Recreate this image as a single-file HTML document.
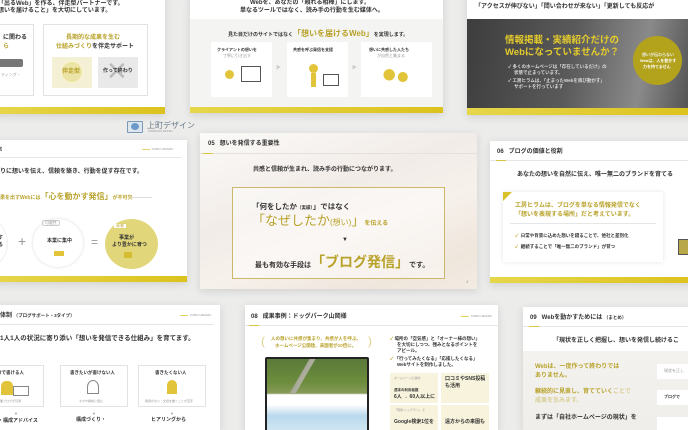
<!DOCTYPE html>
<html><head><meta charset="utf-8">
<style>
*{margin:0;padding:0;box-sizing:border-box}
html,body{width:688px;height:424px;overflow:hidden;background:#ececeb;font-family:"Liberation Sans","Noto Sans CJK JP",sans-serif;color:#333}
.c{position:absolute;background:#fff;box-shadow:0 2px 8px rgba(0,0,0,.12);overflow:hidden}
.t{position:absolute;white-space:nowrap;font-weight:bold;line-height:1}
.bar{position:absolute;left:0;right:0;bottom:0;height:6px;background:linear-gradient(90deg,#e6d64a,#dcc21c)}
.m{color:#b8a22a}
.bx{position:absolute;background:#fff;border:1px solid #e2e2e2}
.ln{position:absolute;height:1px;background:#e6e6e6}
.ul{position:absolute;height:1px;width:10px;background:#d8c440}
.g{color:#999;font-weight:normal}
</style></head><body>

<!-- Card A -->
<div class="c" style="left:-6px;top:-6px;width:171px;height:120px">
 <div class="t" style="left:4px;top:7px;font-size:6px">「出るWeb」を作る、伴走型パートナーです。</div>
 <div class="t" style="left:4px;top:14px;font-size:6px">想いを届けること」を大切にしています。</div>
 <div class="bx" style="left:0;top:30px;width:40px;height:72px">
  <div class="t" style="left:8px;top:10px;font-size:6px">に関わる</div>
  <div class="t m" style="left:8px;top:19px;font-size:6px">ら</div>
  <div style="position:absolute;left:2px;top:34px;width:26px;height:8px;background:#777;border-radius:2px"></div>
  <div class="t g" style="left:6px;top:48px;font-size:4px">ティング・</div>
 </div>
 <div class="bx" style="left:49px;top:30px;width:105px;height:72px">
  <div class="t m" style="left:22px;top:10px;font-size:6px">長期的な成果を生む</div>
  <div class="t" style="left:12px;top:19px;font-size:6px"><span class="m">仕組みづくり</span>を伴走サポート</div>
  <div style="position:absolute;left:8px;top:32px;width:40px;height:31px;background:#f4f0d6"></div>
  <div style="position:absolute;left:16px;top:35px;width:24px;height:24px;border-radius:50%;background:#ece3a6;border:2px solid #f7f2d0"></div>
  <div class="t m" style="left:18px;top:44px;font-size:6px">伴走型</div>
  <div style="position:absolute;left:54px;top:32px;width:40px;height:31px;background:#e9e9e9"></div>
  <div class="t" style="left:62px;top:33px;font-size:26px;color:#bbb;font-weight:normal">✕</div>
  <div class="t" style="left:59px;top:44px;font-size:5px">作って終わり</div>
 </div>
 <div class="bar" style="height:7px"></div>
</div>

<!-- Card B -->
<div class="c" style="left:190px;top:-6px;width:253px;height:119px">
 <div class="t" style="left:60px;top:6px;font-size:6px">Webを、あなたの「頼れる相棒」にします。</div>
 <div class="t" style="left:50px;top:14px;font-size:6px">単なるツールではなく、読み手の行動を生む媒体へ。</div>
 <div style="position:absolute;left:0;top:25px;width:253px;height:89px;background:#f4f4f2"></div>
 <div class="t" style="left:38px;top:36px;font-size:5px">見た目だけのサイトではなく<span class="m" style="font-size:8px">「想いを届けるWeb」</span>を実現します。</div>
 <div class="bx" style="left:21px;top:48px;width:61px;height:55px;border:none">
  <div class="t" style="left:6px;top:6px;font-size:4px">クライアントの想いを</div>
  <div class="t g" style="left:12px;top:12px;font-size:4px">丁寧に引き出す</div>
  <div style="position:absolute;left:30px;top:24px;width:20px;height:16px;border:1px solid #555"></div>
  <div style="position:absolute;left:14px;top:28px;width:9px;height:9px;border-radius:50%;background:#e2c43a"></div>
 </div>
 <div class="t" style="left:86px;top:72px;font-size:5px;color:#ccc">▶</div>
 <div class="bx" style="left:97px;top:48px;width:61px;height:55px;border:none">
  <div class="t" style="left:6px;top:6px;font-size:4px">共感を呼ぶ発信を支援</div>
  <div style="position:absolute;left:22px;top:22px;width:9px;height:9px;border-radius:50%;background:#e2c43a"></div>
  <div style="position:absolute;left:24px;top:31px;width:5px;height:14px;background:#e2c43a"></div>
  <div style="position:absolute;left:36px;top:32px;width:16px;height:12px;border:1px solid #555"></div>
 </div>
 <div class="t" style="left:162px;top:72px;font-size:5px;color:#ccc">▶</div>
 <div class="bx" style="left:171px;top:48px;width:71px;height:55px;border:none">
  <div class="t" style="left:8px;top:6px;font-size:4px">想いに共感した人たち</div>
  <div class="t g" style="left:16px;top:12px;font-size:4px">が自然と集まる</div>
  <div style="position:absolute;left:18px;top:24px;width:34px;height:22px;background:radial-gradient(circle at 30% 40%,#e2c43a 20%,transparent 22%),radial-gradient(circle at 70% 50%,#e2c43a 18%,transparent 20%)"></div>
 </div>
 <div class="bar"></div>
</div>

<!-- Card C -->
<div class="c" style="left:467px;top:-6px;width:230px;height:121px">
 <div class="t" style="left:8px;top:10px;font-size:6px">「アクセスが伸びない」「問い合わせが来ない」「更新しても反応が</div>
 <div style="position:absolute;left:0;top:25px;width:230px;height:89px;background:linear-gradient(100deg,#3d3d3d 0%,#5a5a5a 45%,#8a8a8a 75%,#4a4a4a 100%)"></div>
 <div class="t" style="left:38px;top:42px;font-size:9.5px;color:#e5cc2c">情報掲載・実績紹介だけの</div>
 <div class="t" style="left:38px;top:54px;font-size:9.5px;color:#e5cc2c">Webになっていませんか？</div>
 <div class="t" style="left:41px;top:71px;font-size:4.5px;color:#ddd">✓ 多くのホームページは「存在しているだけ」の</div>
 <div class="t" style="left:47px;top:77px;font-size:4.5px;color:#ddd">状態で止まっています。</div>
 <div class="t" style="left:41px;top:85px;font-size:4.5px;color:#ddd">✓ 工房ヒラムは、「止まったWebを再び動かす」</div>
 <div class="t" style="left:47px;top:91px;font-size:4.5px;color:#ddd">サポートを行っています</div>
 <div style="position:absolute;left:166px;top:42px;width:49px;height:49px;border-radius:50%;background:#b3a21c"></div>
 <div class="t" style="left:175px;top:59px;font-size:4px;color:#eee">想いが伝わらない</div>
 <div class="t" style="left:173px;top:65px;font-size:4px;color:#fff">Webは、人を動かす</div>
 <div class="t" style="left:176px;top:71px;font-size:4px;color:#fff">力を持てません</div>
 <div class="bar" style="height:7px"></div>
</div>

<!-- Logo -->
<div style="position:absolute;left:127px;top:121px;width:16px;height:12px;background:#dde6ee;border:1px solid #7a9bb8;border-radius:1px"></div>
<div style="position:absolute;left:131px;top:123px;width:8px;height:7px;border-radius:50%;background:#6a9ac8"></div>
<div class="t" style="left:147px;top:122px;font-size:8px;color:#6a7a8a;font-weight:normal">上町デザイン</div>
<div class="t" style="left:148px;top:131px;font-size:2.5px;color:#999;font-weight:normal">KAMIMACHI DESIGN</div>

<!-- Card D -->
<div class="c" style="left:-6px;top:140px;width:193px;height:142px">
 <div class="t" style="left:6px;top:7px;font-size:6px">t</div>
 <div style="position:absolute;left:148px;top:9px;width:8px;height:3px;border-top:1px solid #e2d36a"></div>
 <div class="t g" style="left:158px;top:8px;font-size:3px">KOBO HIRAMU</div>
 <div class="ln" style="left:0;right:6px;top:17px"></div>
 <div class="t" style="left:6px;top:29px;font-size:6px">りに想いを伝え、信頼を築き、行動を促す存在です。</div>
 <div class="t" style="left:6px;top:53px;font-size:5px" ><span class="m">果を出すWebには</span><span class="m" style="font-size:8px">「心を動かす発信」</span><span class="m">が不可欠</span></div>
 <div class="ln" style="left:138px;width:20px;top:57px;background:#ddd"></div>
 <div style="position:absolute;left:-26px;top:79px;width:40px;height:48px;border-radius:50%;background:#fff;border:1px solid #eee"></div>
 <div class="t" style="left:4px;top:96px;font-size:5px">す</div>
 <div class="t" style="left:4px;top:103px;font-size:5px">る</div>
 <div class="t" style="left:24px;top:94px;font-size:14px;color:#999;font-weight:normal">+</div>
 <div style="position:absolute;left:39px;top:79px;width:50px;height:48px;border-radius:50%;background:#fff;box-shadow:0 0 3px rgba(0,0,0,.15)"></div>
 <div class="t g" style="left:48px;top:80px;font-size:4px;border:1px solid #ccc;border-radius:2px;padding:0 2px">可能性</div>
 <div class="t" style="left:53px;top:99px;font-size:5px">本業に集中</div>
 <div style="position:absolute;left:60px;top:111px;width:10px;height:5px;background:#e2c43a"></div>
 <div class="t" style="left:97px;top:96px;font-size:12px;color:#999;font-weight:normal">=</div>
 <div style="position:absolute;left:111px;top:79px;width:53px;height:50px;border-radius:50%;background:#e2d67a"></div>
 <div class="t g" style="left:120px;top:84px;font-size:4px;color:#fff;background:#fff;color:#b8a22a;padding:0 2px">未来</div>
 <div class="t" style="left:125px;top:96px;font-size:5px">事業が</div>
 <div class="t" style="left:118px;top:103px;font-size:5px">より豊かに育つ</div>
 <div style="position:absolute;left:130px;top:112px;width:8px;height:6px;background:#d4bd30"></div>
 <div class="bar"></div>
</div>

<!-- Card E -->
<div class="c" style="left:200px;top:133px;width:277px;height:156px;background:linear-gradient(160deg,#fbfaf8 0%,#f2ece8 40%,#f7f1ec 60%,#efe6dc 85%,#f3ece2 100%)">
 <div class="t" style="left:8px;top:8px;font-size:6px">05&nbsp;&nbsp; 想いを発信する重要性</div>
 <div class="ln" style="left:0;right:0;top:20px;background:#e4e0dc"></div>
 <div class="ul" style="left:3px;top:20px"></div>
 <div class="t" style="left:53px;top:34px;font-size:6px">共感と信頼が生まれ、読み手の行動につながります。</div>
 <div style="position:absolute;left:32px;top:54px;width:213px;height:92px;border:1px solid #cdb86a;background:rgba(255,255,255,.45)"></div>
 <div class="t" style="left:52px;top:70px;font-size:7.5px">「何をしたか<span style="font-size:4.5px">（実績）</span>」ではなく</div>
 <div class="t m" style="left:52px;top:81px;font-size:13px;font-weight:normal">「なぜしたか<span style="font-size:8px">(想い)</span>」<span style="font-size:6px;font-weight:bold">を伝える</span></div>
 <div class="t" style="left:142px;top:104px;font-size:6px">▼</div>
 <div class="t" style="left:55px;top:122px;font-size:7px">最も有効な手段は<span class="m" style="font-size:14px">「ブログ発信」</span>です。</div>
 <div class="t g" style="left:266px;top:147px;font-size:4px">4</div>
</div>

<!-- Card F -->
<div class="c" style="left:490px;top:141px;width:206px;height:142px">
 <div class="t" style="left:7px;top:8px;font-size:6px">06&nbsp;&nbsp; ブログの価値と役割</div>
 <div class="ln" style="left:0;right:0;top:19px"></div>
 <div class="ul" style="left:6px;top:19px"></div>
 <div class="t" style="left:27px;top:31px;font-size:6px">あなたの想いを自然に伝え、唯一無二のブランドを育てる</div>
 <div style="position:absolute;left:13px;top:51px;width:160px;height:70px;background:#fff;box-shadow:0 0 5px rgba(0,0,0,.1)"></div>
 <div style="position:absolute;left:13px;top:51px;width:0;height:0;border-top:9px solid #d8c22a;border-right:9px solid transparent"></div>
 <div class="t m" style="left:25px;top:62px;font-size:6px">工房ヒラムは、ブログを単なる情報発信でなく</div>
 <div class="t m" style="left:25px;top:71px;font-size:6px">「想いを表現する場所」だと考えています。</div>
 <div class="ln" style="left:20px;width:146px;top:82px"></div>
 <div class="t" style="left:25px;top:93px;font-size:4.5px"><span class="m">✓</span>&nbsp; 日常や背景に込めた想いを綴ることで、他社と差別化</div>
 <div class="t" style="left:25px;top:104px;font-size:4.5px"><span class="m">✓</span>&nbsp; 継続することで「唯一無二のブランド」が育つ</div>
 <div style="position:absolute;left:188px;top:98px;width:12px;height:16px;background:#b9a84a;border:1px solid #555"></div>
 <div class="bar"></div>
</div>

<!-- Card G -->
<div class="c" style="left:-6px;top:305px;width:226px;height:125px">
 <div class="t" style="left:6px;top:8px;font-size:6px">体制 <span style="font-size:4.5px">（ブログサポート・3タイプ）</span></div>
 <div style="position:absolute;left:186px;top:10px;width:8px;height:3px;border-top:1px solid #e2d36a"></div>
 <div class="t g" style="left:196px;top:9px;font-size:3px">KOBO HIRAMU</div>
 <div class="ln" style="left:0;right:6px;top:19px"></div>
 <div class="t" style="left:6px;top:31px;font-size:6.5px">1人1人の状況に寄り添い「想いを発信できる仕組み」を育てます。</div>
 <div class="bx" style="left:-4px;top:60px;width:54px;height:42px">
  <div class="t" style="left:6px;top:5px;font-size:4.5px">分で書ける人</div>
  <div style="position:absolute;left:10px;top:15px;width:12px;height:14px;background:#e2c43a;border-radius:5px 5px 0 0"></div>
  <div style="position:absolute;left:22px;top:20px;width:16px;height:10px;border:1px solid #888"></div>
  <div class="t g" style="left:6px;top:34px;font-size:3px">主業ブログが円滑</div>
 </div>
 <div class="bx" style="left:66px;top:60px;width:68px;height:42px">
  <div class="t" style="left:9px;top:5px;font-size:4.5px">書きたいが書けない人</div>
  <div style="position:absolute;left:26px;top:14px;width:12px;height:14px;border:1px solid #888;border-radius:50% 50% 0 0"></div>
  <div class="t g" style="left:18px;top:34px;font-size:3px">ネタや構成に悩む</div>
 </div>
 <div class="bx" style="left:144px;top:60px;width:68px;height:42px">
  <div class="t" style="left:16px;top:5px;font-size:4.5px">書きたくない人</div>
  <div style="position:absolute;left:28px;top:14px;width:10px;height:14px;background:#e2c43a;border-radius:5px 5px 0 0"></div>
  <div class="t g" style="left:6px;top:34px;font-size:3px">時間がない・文章を書くことが苦手</div>
 </div>
 <div class="t g" style="left:20px;top:107px;font-size:4px">▼</div>
 <div class="t g" style="left:98px;top:107px;font-size:4px">▼</div>
 <div class="t g" style="left:176px;top:107px;font-size:4px">▼</div>
 <div class="t" style="left:4px;top:114px;font-size:5px">・構成アドバイス</div>
 <div class="t" style="left:82px;top:113px;font-size:5px">構成づくり・</div>
 <div class="t" style="left:157px;top:113px;font-size:5px">ヒアリングから</div>
</div>

<!-- Card H -->
<div class="c" style="left:245px;top:305px;width:253px;height:125px">
 <div class="t" style="left:6px;top:9px;font-size:6px">08&nbsp;&nbsp; 成果事例：ドッグパーク山岡様</div>
 <div style="position:absolute;left:216px;top:11px;width:8px;height:3px;border-top:1px solid #e2d36a"></div>
 <div class="t g" style="left:226px;top:10px;font-size:3px">KOBO HIRAMU</div>
 <div class="ln" style="left:0;right:0;top:20px"></div>
 <div class="ul" style="left:4px;top:20px"></div>
 <div class="t m" style="left:16px;top:30px;font-size:12px;font-weight:normal;color:#ddd08a">(</div>
 <div class="t m" style="left:26px;top:32px;font-size:4.5px">人の想いに共感が集まり、共感が人を呼ぶ。</div>
 <div class="t m" style="left:30px;top:39px;font-size:4.5px">ホームページ公開後、来園者が10倍に。</div>
 <div class="t m" style="left:123px;top:30px;font-size:12px;font-weight:normal;color:#ddd08a">)</div>
 <div style="position:absolute;left:20px;top:52px;width:104px;height:80px;border:2px solid #222;border-radius:2px;background:linear-gradient(180deg,#5a7a3a 0%,#6c8c3c 30%,#889a5a 45%,#fff 47%,#fff 60%,#b8d8ec 75%,#d8ecf4 100%)"></div>
 <div style="position:absolute;left:40px;top:54px;width:40px;height:34px;background:linear-gradient(120deg,transparent 40%,#a8a89a 42%,#b0b0a0 50%,transparent 52%)"></div>
 <div class="t" style="left:145px;top:32px;font-size:4.5px"><span class="m">✓</span> 場所の「空気感」と「オーナー様の想い」</div>
 <div class="t" style="left:152px;top:38px;font-size:4.5px">を大切にしつつ、強みとなるポイントを</div>
 <div class="t" style="left:152px;top:44px;font-size:4.5px">アピール。</div>
 <div class="t" style="left:145px;top:52px;font-size:4.5px"><span class="m">✓</span> 「行ってみたくなる」「応援したくなる」</div>
 <div class="t" style="left:152px;top:58px;font-size:4.5px">Webサイトを制作しました。</div>
 <div style="position:absolute;left:145px;top:68px;width:48px;height:30px;background:#f8f3dc"></div>
 <div style="position:absolute;left:196px;top:68px;width:48px;height:30px;background:#f8f3dc"></div>
 <div style="position:absolute;left:145px;top:100px;width:48px;height:30px;background:#f8f3dc"></div>
 <div style="position:absolute;left:196px;top:100px;width:48px;height:30px;background:#f8f3dc"></div>
 <div class="t g" style="left:149px;top:72px;font-size:3px">ホームページ公開を</div>
 <div class="t" style="left:149px;top:84px;font-size:3.5px">週末の利用者数</div>
 <div class="t" style="left:149px;top:90px;font-size:5px">6人 → 60人以上に</div>
 <div class="t" style="left:200px;top:72px;font-size:5px">口コミやSNS投稿</div>
 <div class="t" style="left:200px;top:79px;font-size:5px">も活用</div>
 <div class="t g" style="left:149px;top:104px;font-size:3px">「現場 ドッグラン」で</div>
 <div class="t" style="left:149px;top:115px;font-size:5px">Google検索1位を</div>
 <div class="t" style="left:200px;top:115px;font-size:5px">遠方からの来園も</div>
</div>

<!-- Card I -->
<div class="c" style="left:523px;top:307px;width:172px;height:123px">
 <div class="t" style="left:7px;top:8px;font-size:6px">09&nbsp;&nbsp; Webを動かすためには <span style="font-size:4.5px">（まとめ）</span></div>
 <div class="ln" style="left:0;right:0;top:19px"></div>
 <div class="ul" style="left:6px;top:19px"></div>
 <div class="t" style="left:30px;top:31px;font-size:6px">「現状を正しく把握し、想いを発信し続けるこ</div>
 <div style="position:absolute;left:0;top:44px;width:172px;height:79px;background:linear-gradient(180deg,#f4f2ef,#f0eeea)"></div>
 <div class="t m" style="left:12px;top:57px;font-size:6px">Webは、一度作って終わりでは</div>
 <div class="t m" style="left:12px;top:66px;font-size:6px">ありません。</div>
 <div class="t m" style="left:12px;top:82px;font-size:6px">継続的に見直し、育てていく<span style="color:#d8cf98">ことで</span></div>
 <div class="t" style="left:12px;top:91px;font-size:6px;color:#d8cf98">成果を生みます。</div>
 <div class="t" style="left:12px;top:108px;font-size:6px">まずは「自社ホームページの現状」を</div>
 <div style="position:absolute;left:134px;top:57px;width:40px;height:15px;background:#fff"></div>
 <div class="t g" style="left:141px;top:62px;font-size:4px">現状を正し</div>
 <div style="position:absolute;left:134px;top:83px;width:40px;height:15px;background:#fff"></div>
 <div class="t" style="left:141px;top:88px;font-size:4px">ブログで</div>
 <div style="position:absolute;left:134px;top:110px;width:40px;height:15px;background:#fff"></div>
</div>

</body></html>
